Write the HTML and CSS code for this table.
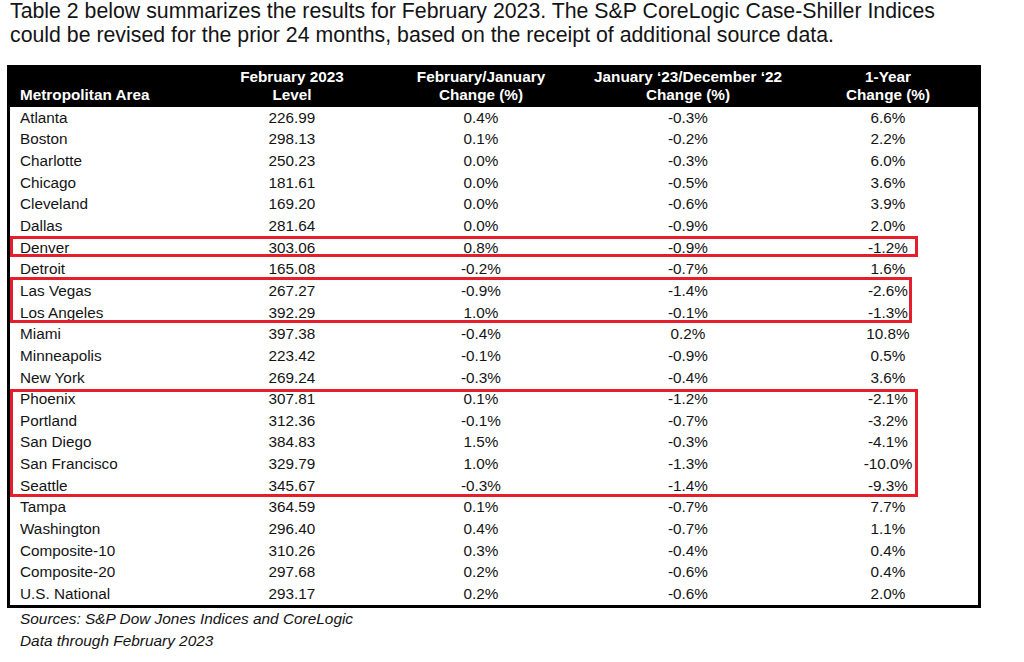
FILE: index.html
```html
<!DOCTYPE html>
<html lang="en">
<head>
<meta charset="utf-8">
<title>Case-Shiller Table 2</title>
<link rel="stylesheet" href="styles.css">
</head>
<body>
<p class="intro">Table 2 below summarizes the results for February 2023. The S&amp;P CoreLogic Case-Shiller Indices could be revised for the prior 24 months, based on the receipt of additional source data.</p>
<div class="table-wrap">
  <table class="data">
    <thead>
      <tr>
        <th class="c-area">Metropolitan Area</th>
        <th class="c-level">February 2023<br>Level</th>
        <th class="c-fj">February/January<br>Change (%)</th>
        <th class="c-jd">January ‘23/December ‘22<br>Change (%)</th>
        <th class="c-yr">1-Year<br>Change (%)</th>
      </tr>
    </thead>
    <tbody>
      <tr><td>Atlanta</td><td>226.99</td><td>0.4%</td><td>-0.3%</td><td>6.6%</td></tr>
      <tr><td>Boston</td><td>298.13</td><td>0.1%</td><td>-0.2%</td><td>2.2%</td></tr>
      <tr><td>Charlotte</td><td>250.23</td><td>0.0%</td><td>-0.3%</td><td>6.0%</td></tr>
      <tr><td>Chicago</td><td>181.61</td><td>0.0%</td><td>-0.5%</td><td>3.6%</td></tr>
      <tr><td>Cleveland</td><td>169.20</td><td>0.0%</td><td>-0.6%</td><td>3.9%</td></tr>
      <tr><td>Dallas</td><td>281.64</td><td>0.0%</td><td>-0.9%</td><td>2.0%</td></tr>
      <tr><td>Denver</td><td>303.06</td><td>0.8%</td><td>-0.9%</td><td>-1.2%</td></tr>
      <tr><td>Detroit</td><td>165.08</td><td>-0.2%</td><td>-0.7%</td><td>1.6%</td></tr>
      <tr><td>Las Vegas</td><td>267.27</td><td>-0.9%</td><td>-1.4%</td><td>-2.6%</td></tr>
      <tr><td>Los Angeles</td><td>392.29</td><td>1.0%</td><td>-0.1%</td><td>-1.3%</td></tr>
      <tr><td>Miami</td><td>397.38</td><td>-0.4%</td><td>0.2%</td><td>10.8%</td></tr>
      <tr><td>Minneapolis</td><td>223.42</td><td>-0.1%</td><td>-0.9%</td><td>0.5%</td></tr>
      <tr><td>New York</td><td>269.24</td><td>-0.3%</td><td>-0.4%</td><td>3.6%</td></tr>
      <tr><td>Phoenix</td><td>307.81</td><td>0.1%</td><td>-1.2%</td><td>-2.1%</td></tr>
      <tr><td>Portland</td><td>312.36</td><td>-0.1%</td><td>-0.7%</td><td>-3.2%</td></tr>
      <tr><td>San Diego</td><td>384.83</td><td>1.5%</td><td>-0.3%</td><td>-4.1%</td></tr>
      <tr><td>San Francisco</td><td>329.79</td><td>1.0%</td><td>-1.3%</td><td>-10.0%</td></tr>
      <tr><td>Seattle</td><td>345.67</td><td>-0.3%</td><td>-1.4%</td><td>-9.3%</td></tr>
      <tr><td>Tampa</td><td>364.59</td><td>0.1%</td><td>-0.7%</td><td>7.7%</td></tr>
      <tr><td>Washington</td><td>296.40</td><td>0.4%</td><td>-0.7%</td><td>1.1%</td></tr>
      <tr><td>Composite-10</td><td>310.26</td><td>0.3%</td><td>-0.4%</td><td>0.4%</td></tr>
      <tr><td>Composite-20</td><td>297.68</td><td>0.2%</td><td>-0.6%</td><td>0.4%</td></tr>
      <tr><td>U.S. National</td><td>293.17</td><td>0.2%</td><td>-0.6%</td><td>2.0%</td></tr>
    </tbody>
  </table>
  <div class="mark mark-denver"></div>
  <div class="mark mark-lv"></div>
  <div class="mark mark-west"></div>
</div>
<div class="notes">
  <p>Sources: S&amp;P Dow Jones Indices and CoreLogic</p>
  <p>Data through February 2023</p>
</div>
</body>
</html>
```
FILE: styles.css
```css
html, body {
  margin: 0;
  padding: 0;
  background: #ffffff;
}
body {
  font-family: "Liberation Sans", Arial, sans-serif;
  color: #141414;
  width: 1024px;
  height: 662px;
  overflow: hidden;
}
.intro {
  margin: 0;
  padding: 0 0 0 10px;
  font-size: 21.3px;
  line-height: 23.5px;
  width: 940px;
}
.table-wrap {
  position: relative;
  margin: 18px 0 0 7px;
  width: 974px;
}
.data {
  width: 100%;
  border-collapse: separate;
  border-spacing: 0;
  border: 3px solid #000;
  font-size: 15.3px;
  table-layout: fixed;
}
.data th {
  background: #000;
  color: #fff;
  font-weight: bold;
  font-size: 15.3px;
  line-height: 17.5px;
  height: 35px;
  padding: 0 0 4px;
  vertical-align: bottom;
  text-align: center;
}
.data th.c-area {
  text-align: left;
  padding-left: 10px;
  width: 180px;
}
.data th.c-level { width: 184px; }
.data th.c-fj { width: 194px; }
.data th.c-jd { width: 220px; }
.data td {
  height: 21.65px;
  padding: 0;
  line-height: 18px;
  text-align: center;
  vertical-align: middle;
}
.data td:first-child {
  text-align: left;
  padding-left: 10px;
}
.mark {
  position: absolute;
  left: 3px;
  border: 3px solid #e41e2a;
  box-sizing: border-box;
}
.mark-denver {
  top: 171px;
  height: 21px;
  width: 908px;
}
.mark-lv {
  top: 212px;
  height: 46px;
  width: 902px;
}
.mark-west {
  top: 324px;
  height: 108px;
  width: 908px;
}
.notes {
  padding-left: 20px;
  margin-top: 0;
  font-size: 15.4px;
  font-style: italic;
}
.notes p {
  margin: 0;
  line-height: 22px;
}
```
